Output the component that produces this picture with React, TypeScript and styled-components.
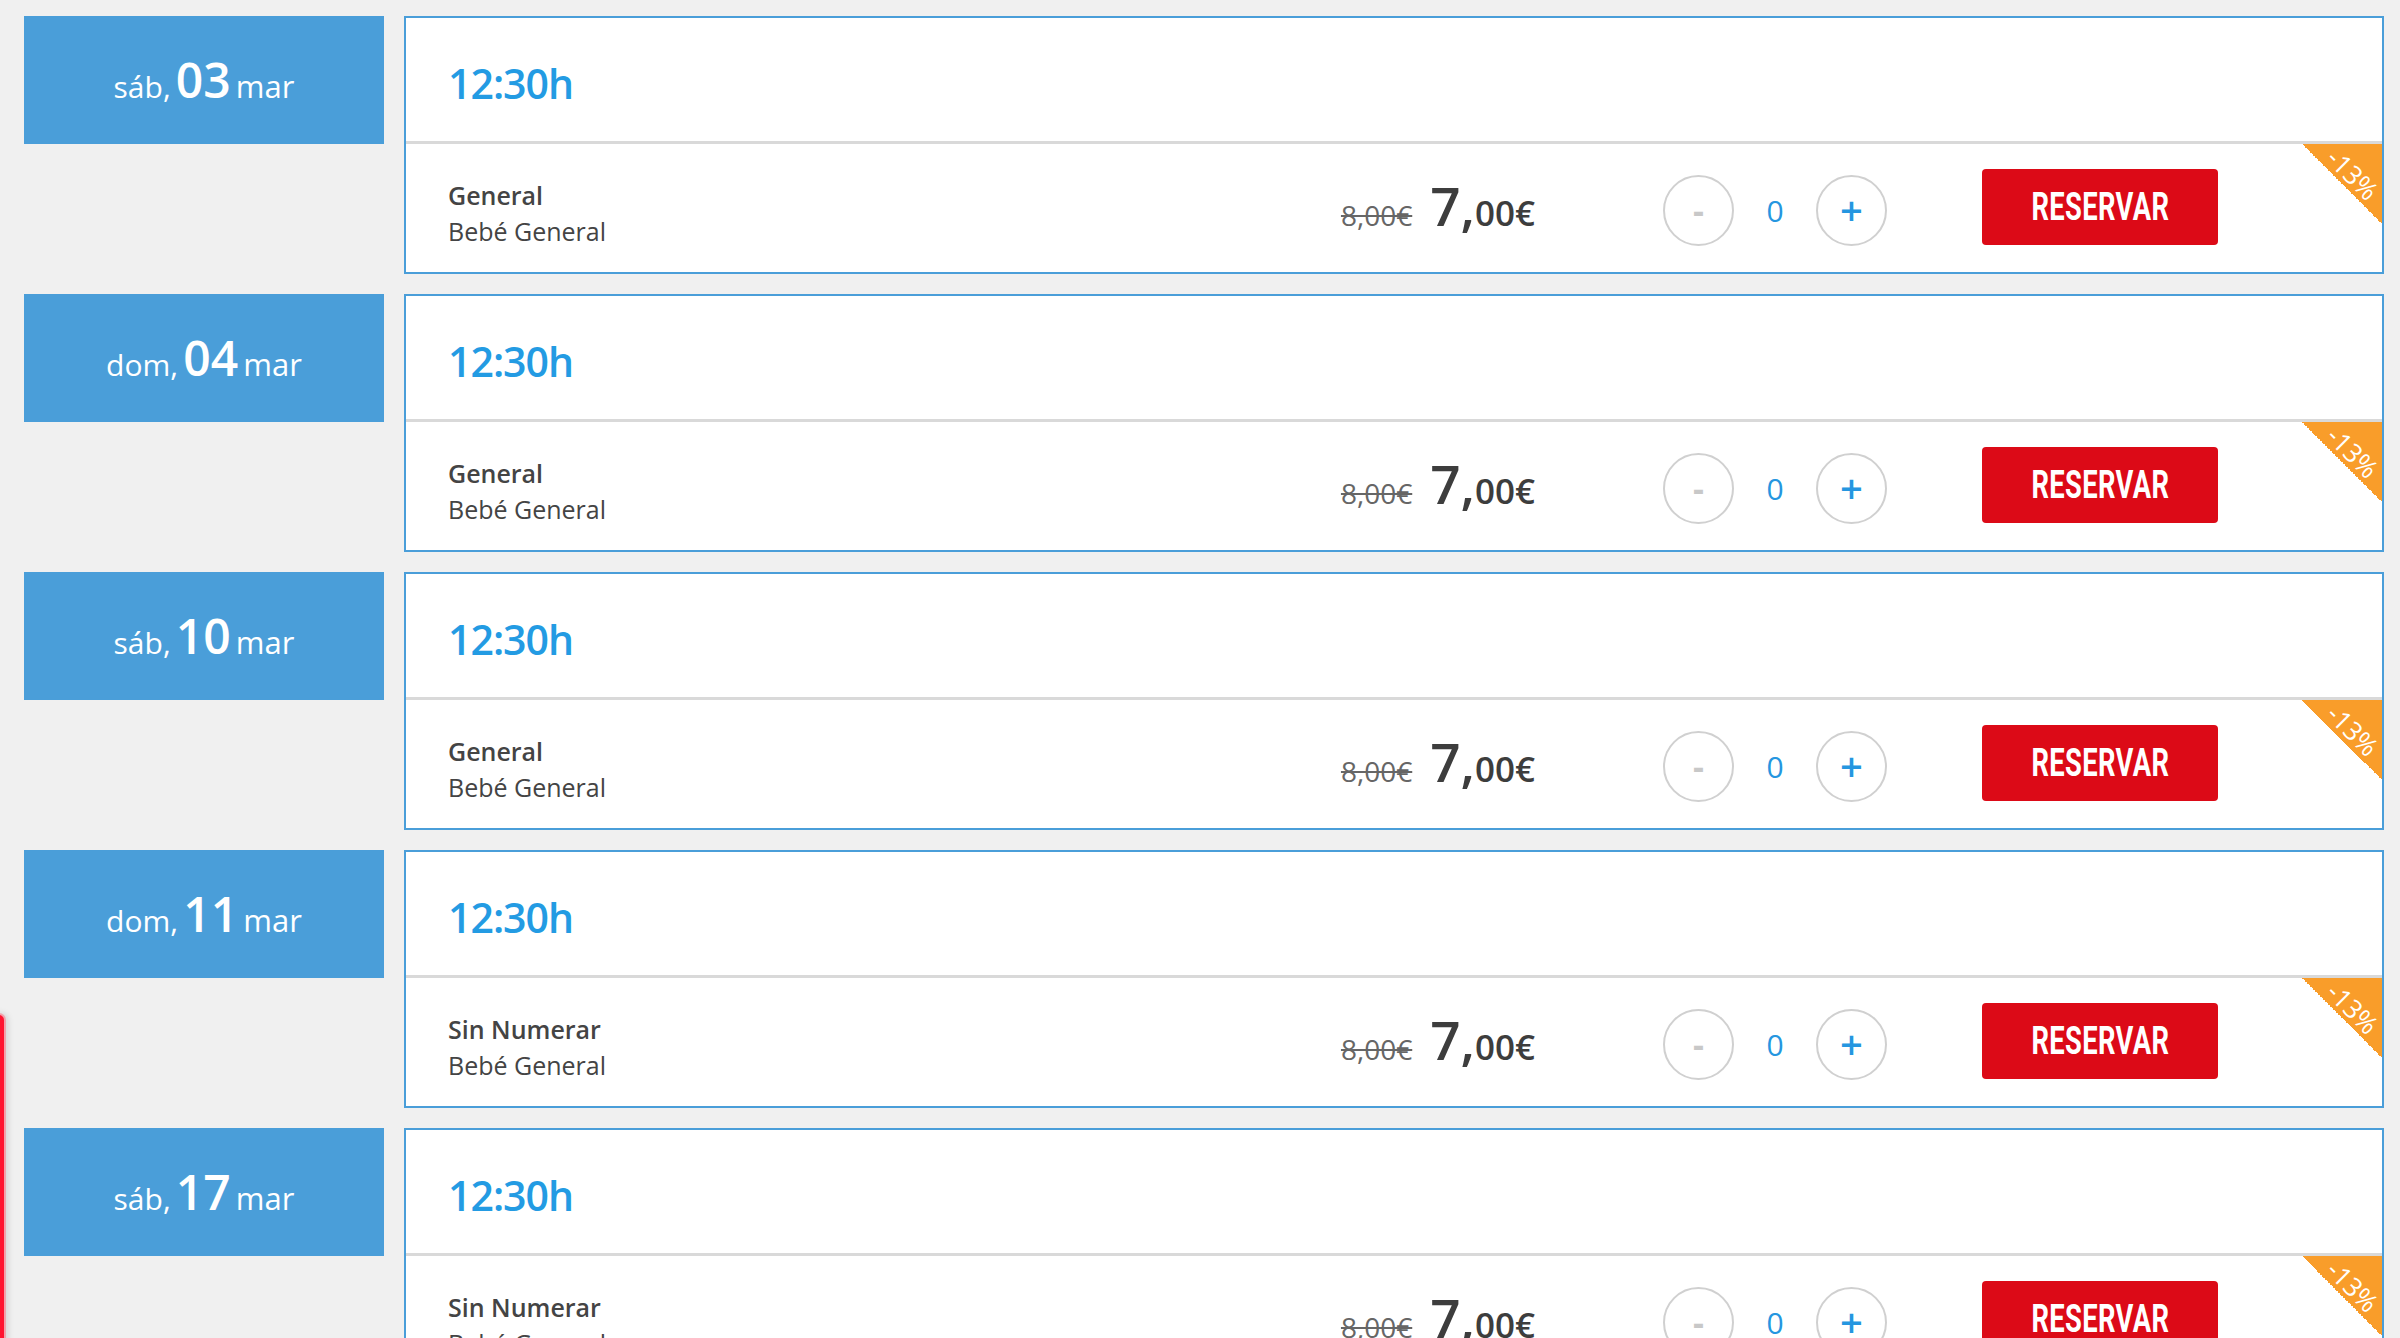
import React from 'react';
import styled, { createGlobalStyle } from 'styled-components';

const GlobalStyle = createGlobalStyle`
  html, body {
    margin: 0;
    padding: 0;
    background: #f0f0f0;
  }
  body {
    font-family: "Open Sans", "Noto Sans", Arial, sans-serif;
    overflow: hidden;
  }
`;

const Page = styled.div`
  display: flex;
  flex-direction: column;
  gap: 20px;
  padding: 16px 16px 0 24px;
`;

const DayRow = styled.div`
  display: grid;
  grid-template-columns: 360px 1fr;
  column-gap: 20px;
  align-items: start;
`;

const DateBox = styled.div`
  height: 128px;
  background: #4a9ed9;
  color: #fff;
  display: flex;
  align-items: center;
  justify-content: center;
`;

const DateLabel = styled.span`
  white-space: nowrap;
  line-height: 1;
`;

const Weekday = styled.span`
  font-size: 30px;
  font-weight: 400;
`;

const DayNum = styled.span`
  font-size: 48px;
  font-weight: 600;
  margin: 0 1px;
`;

const Month = styled.span`
  font-size: 31px;
  font-weight: 400;
`;

const Card = styled.div`
  background: #fff;
  border: 2px solid #4a9ed9;
`;

const CardHeader = styled.div`
  height: 126px;
  display: flex;
  align-items: center;
  padding: 6px 0 0 42px;
  box-sizing: border-box;
  border-bottom: 3px solid #d9d9d9;
`;

const Time = styled.span`
  font-size: 41px;
  font-weight: 600;
  color: #239be3;
  letter-spacing: -1px;
`;

const TicketRow = styled.div`
  position: relative;
  height: 128px;
  display: flex;
  align-items: center;
  padding: 4px 164px 0 42px;
  box-sizing: border-box;
`;

const Labels = styled.div`
  flex: 1;
  display: flex;
  flex-direction: column;
  color: #444;
  padding-top: 6px;
`;

const LabelLine = styled.span<{ $strong?: boolean }>`
  font-size: 25px;
  line-height: 36px;
  font-weight: ${(p) => (p.$strong ? 600 : 400)};
`;

const Price = styled.div`
  display: flex;
  align-items: baseline;
  color: #3d3d3d;
  margin-top: -8px;
`;

const OldPrice = styled.span`
  font-size: 28px;
  color: #666;
  text-decoration: line-through;
  text-decoration-thickness: 2px;
  margin-right: 18px;
`;

const PriceMain = styled.span`
  font-size: 53px;
  font-weight: 600;
  line-height: 1;
`;

const PriceCents = styled.span`
  font-size: 35px;
  font-weight: 600;
  line-height: 1;
`;

const Counter = styled.div`
  display: flex;
  align-items: center;
  margin-left: 128px;
`;

const RoundButton = styled.button<{ $active?: boolean }>`
  width: 71px;
  height: 71px;
  border-radius: 50%;
  border: 2px solid #d0d0d0;
  background: #fff;
  padding: 0;
  display: flex;
  align-items: center;
  justify-content: center;
  font-family: "Open Sans", Arial, sans-serif;
  font-size: ${(p) => (p.$active ? '40px' : '34px')};
  font-weight: ${(p) => (p.$active ? 600 : 700)};
  color: ${(p) => (p.$active ? '#2596e0' : '#c8c8c8')};
  line-height: 1;
  cursor: pointer;
`;

const Count = styled.span`
  width: 82px;
  text-align: center;
  font-size: 30px;
  color: #2596e0;
`;

const ReserveButton = styled.button`
  margin-left: 95px;
  width: 236px;
  height: 76px;
  margin-top: -7px;
  border: none;
  border-radius: 4px;
  background: #dc0a17;
  color: #fff;
  display: flex;
  align-items: center;
  justify-content: center;
  cursor: pointer;
  padding: 0;
`;

const ReserveText = styled.span`
  display: inline-block;
  font-family: Roboto, "Liberation Sans", Arial, sans-serif;
  font-size: 39px;
  font-weight: 700;
  transform: scaleX(0.7);
  letter-spacing: 0.5px;
`;

const Ribbon = styled.div`
  position: absolute;
  top: 0;
  right: 0;
  width: 80px;
  height: 80px;
  background: linear-gradient(to bottom left, #f99d2a 50%, transparent 50%);
`;

const RibbonText = styled.span`
  position: absolute;
  left: 51px;
  top: 30px;
  transform: translate(-50%, -50%) rotate(45deg);
  color: #fff;
  font-size: 26px;
  line-height: 1;
  white-space: nowrap;
`;

const EdgeTab = styled.div`
  position: fixed;
  left: -12px;
  top: 1013px;
  width: 14px;
  height: 360px;
  background: #ff1430;
  border: 2px solid #f2a2ab;
  border-radius: 7px;
  box-shadow: 2px 0 6px rgba(0, 0, 0, 0.12);
`;

interface Session {
  weekday: string;
  day: string;
  month: string;
  time: string;
  ticket: string;
}

const sessions: Session[] = [
  { weekday: 'sáb', day: '03', month: 'mar', time: '12:30h', ticket: 'General' },
  { weekday: 'dom', day: '04', month: 'mar', time: '12:30h', ticket: 'General' },
  { weekday: 'sáb', day: '10', month: 'mar', time: '12:30h', ticket: 'General' },
  { weekday: 'dom', day: '11', month: 'mar', time: '12:30h', ticket: 'Sin Numerar' },
  { weekday: 'sáb', day: '17', month: 'mar', time: '12:30h', ticket: 'Sin Numerar' },
];

function SessionRow({ session }: { session: Session }) {
  return (
    <DayRow>
      <DateBox>
        <DateLabel>
          <Weekday>{session.weekday},</Weekday> <DayNum>{session.day}</DayNum>{' '}
          <Month>{session.month}</Month>
        </DateLabel>
      </DateBox>
      <Card>
        <CardHeader>
          <Time>{session.time}</Time>
        </CardHeader>
        <TicketRow>
          <Labels>
            <LabelLine $strong>{session.ticket}</LabelLine>
            <LabelLine>Bebé General</LabelLine>
          </Labels>
          <Price>
            <OldPrice>8,00€</OldPrice>
            <PriceMain>7,</PriceMain>
            <PriceCents>00€</PriceCents>
          </Price>
          <Counter>
            <RoundButton>-</RoundButton>
            <Count>0</Count>
            <RoundButton $active>+</RoundButton>
          </Counter>
          <ReserveButton>
            <ReserveText>RESERVAR</ReserveText>
          </ReserveButton>
          <Ribbon>
            <RibbonText>-13%</RibbonText>
          </Ribbon>
        </TicketRow>
      </Card>
    </DayRow>
  );
}

export default function App() {
  return (
    <>
      <GlobalStyle />
      <Page>
        {sessions.map((s, i) => (
          <SessionRow key={i} session={s} />
        ))}
      </Page>
      <EdgeTab />
    </>
  );
}
